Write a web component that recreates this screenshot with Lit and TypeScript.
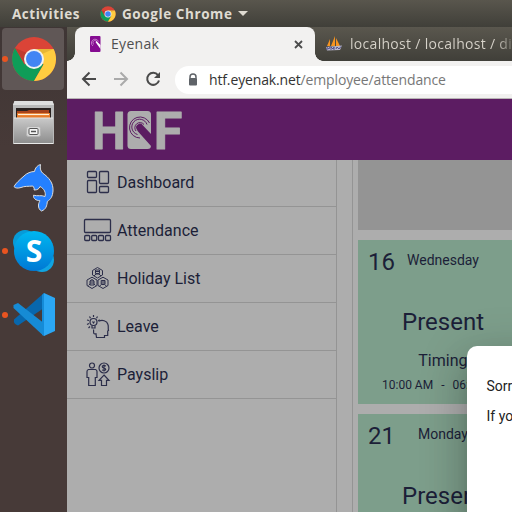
import { LitElement, html, svg, css } from "lit";
import { customElement, property } from "lit/decorators.js";

const chrome = svg`
  <circle cx="24" cy="24" r="22" fill="#db4437"/>
  <path d="M5 13A22 22 0 0 0 24 46L33.5 29.5 24 24 14.5 29.5Z" fill="#0f9d58"/>
  <path d="M24 14H43.6A22 22 0 0 1 24 46L33.5 29.5Z" fill="#ffcd40"/>
  <path d="M24 14H43.6L32 19Z" fill="#c99b2b" opacity=".45"/>
  <path d="M5 13L15 29 17 18Z" fill="#8f2c23" opacity=".35"/>
  <circle cx="24" cy="24" r="10" fill="#f1f1f1"/>
  <circle cx="24" cy="24" r="8" fill="#4285f4"/>`;

const files = svg`
  <defs><linearGradient id="fg" x2="0" y2="1"><stop stop-color="#c9c9c9"/><stop offset="1" stop-color="#8e8e8e"/></linearGradient></defs>
  <path d="M4.500 2H42.500L44 6V45H3V6Z" fill="#b9b9b9"/>
  <path d="M4.500 2H42.500L44 6H3Z" fill="#dedede"/>
  <rect x="6" y="9" width="35" height="11" fill="#29211f"/>
  <path d="M7 12H17L19 11H39V19H7Z" fill="#a8431b"/>
  <path d="M7 14H40V20H7Z" fill="#e87b28"/>
  <path d="M8 15.500H39" stroke="#fff0d8" stroke-width="1.200"/>
  <path d="M4 19H43V44H4Z" fill="url(#fg)"/>
  <path d="M4 19H43" stroke="#e4e4e4"/>
  <rect x="16.500" y="27.500" width="14" height="10" rx="2" fill="#d8d8d8" stroke="#b4b4b4"/>
  <rect x="19" y="29.500" width="9" height="6" rx="1" fill="#f4f4f4" stroke="#555"/>
  <path d="M21 32.500H26" stroke="#555" stroke-width="1.500"/>
  <path d="M4 44.500H43" stroke="#e9e9e9"/>`;

const dolphin = svg`
  <path d="M4 23.500C6 20 9.500 17 14 13C17 10 21 8.500 24.500 8.500C25 4.800 27.500 2.300 30.500 1.500C30 5 30.200 7.500 32.500 10C39 14.500 43.500 20 43 28C42.500 33.500 41 36 37.300 38.500C37 42.500 36 46.500 31.500 48C29.500 46.800 28.300 45 28.500 42C28.600 40 29.500 38.800 30 37.800C26 37.500 23 35.500 23.500 32.200C28 33.500 31 31.800 35 33.500C36 29.500 34.500 26 30 23.500C29 26 27.500 27 24 27C24.800 25.500 23.800 24.500 22.800 23C18 23.500 14.500 23 11 24.500C8 25.500 5 25.300 4 23.500Z" fill="#2480ff" stroke="#dcdcdc" stroke-width="1" stroke-linejoin="round"/>`;

const skype = svg`
  <defs><linearGradient id="sg" x2="0" y2="1"><stop stop-color="#00b7f0"/><stop offset="1" stop-color="#0078d4"/></linearGradient></defs>
  <circle cx="15" cy="15" r="12" fill="#079bd8"/><circle cx="32" cy="33" r="12" fill="#10a5e2"/>
  <circle cx="24" cy="24" r="20" fill="url(#sg)"/>
  <text x="24" y="35" text-anchor="middle" font-family="Open Sans, sans-serif" font-size="30" font-weight="700" fill="#fff">S</text>`;

const code = svg`
  <path d="M4 28.500L34 2V17L8 34.500Q3 33 4 28.500Z" fill="#0867ad"/>
  <path d="M3.500 14L8 12 35 33V44.500L31.500 43 3.500 17Z" fill="#168bd5"/>
  <path d="M34 2L45 7V40L34 45Z" fill="#2ba7f4"/>
  <path d="M34 2V45L32 44V4Z" fill="#148bd8"/>`;

const menuIcons = [
  svg`<rect x="6.500" y="2.500" width="9" height="6" rx="1"/><rect x="18.500" y="2.500" width="9" height="12" rx="1"/><rect x="6.500" y="11.500" width="9" height="12" rx="1"/><rect x="18.500" y="17.500" width="9" height="6" rx="1"/>`,
  svg`<rect x="3.500" y="2.500" width="26" height="13" rx="1"/><rect x="3.700" y="18.500" width="5" height="5" rx="1"/><rect x="10.700" y="18.500" width="5" height="5" rx="1"/><rect x="17.500" y="18.500" width="5" height="5" rx="1"/><rect x="24.500" y="18.500" width="5" height="5" rx="1"/>`,
  svg`<g stroke-width="1"><path d="M11.500 10V5.500L16.500 2.500 21.500 5.500V10L16.500 13Z"/><path d="M6 20.500V15L11 12.200 16 15V20.500L11 23.500Z"/><path d="M17 20.500V15L22 12.200 27 15V20.500L22 23.500Z"/>
    <path d="M14.500 5H18.500V8.500H14.500ZM13 11L15 9H18L20 11M14.500 6.500H18.500"/><path d="M9 20V16Q11 13 13 16V20M10 15V21M12 15V21M7.500 20.500L9 19M14.500 20.500L13 19"/><path d="M20.200 15.500H24V19H20.200ZM18.500 21L20.500 19.500H23.500L25.500 21M20.500 17H24"/></g>`,
  svg`<g stroke-width="1.200"><circle cx="12.500" cy="9" r="3.500"/><path d="M11 12.500V15H14V12.500M11.500 8.500L12.500 10 13.500 8.500"/><path d="M12.500 2V4M8.500 3.500L9.500 5.200M16.500 3.500L15.500 5.200M6 7L8 7.500M19 7L17 7.500M6 11.500L8 10.500M7.500 15L9 13.500"/>
    <path d="M17.500 8.300C21 6.500 26 7.500 27 11.500C27.700 14 26.800 15 27.500 17.500L26.700 18V22.500H23.500V24.500H15.500L15 20.800C11.500 21.500 13 19 12.500 16.500"/></g>`,
  svg`<g stroke-width="1.200"><circle cx="11" cy="4.500" r="2.500"/><path d="M7.500 8.500H14.500Q16 9 16 10.500V16.500H14.300V24.500H7.700V16.500H6V10.500Q6 9 7.500 8.500Z"/><circle cx="23" cy="7" r="5"/><path d="M25 5Q21 3.500 21.300 6C21.500 7.500 24.700 6.500 24.700 8.500Q24 10 21 9M23 3.500V10.500M23 14L28 19.300H25.500V24.500H20.500V19.300H18Z"/></g>`,
];
const menu = ["Dashboard", "Attendance", "Holiday List", "Leave", "Payslip"];
const dock = [
  { icon: chrome, active: true, running: true },
  { icon: files, active: false, running: false },
  { icon: dolphin, active: false, running: false },
  { icon: skype, active: false, running: true },
  { icon: code, active: false, running: true },
];

@customElement("day-card")
class DayCard extends LitElement {
  @property() date = "";
  @property() day = "";
  static styles = css`
    :host { display: block; height: 164px; width: 166px; background: #7d9e8b; color: #1c1f38; box-sizing: border-box; padding: 0 10px; flex: none; white-space: nowrap; }
    .top { display: flex; height: 44px; align-items: center; }
    .date { font-size: 24px; width: 27px; }
    .day { font-size: 14px; flex: 1; text-align: center; margin: -4px 23px 0 0; }
    .status { font-size: 24px; line-height: 32px; margin-top: 22px; padding-left: 4px; text-align: center; }
    .label { font-size: 16px; line-height: 22px; margin-top: 12px; padding-left: 8px; text-align: center; width: 142px; }
    .hours { font-size: 12px; line-height: 16px; margin-top: 5px; padding-left: 14px; display: flex; gap: 8px; }
  `;
  render() {
    return html`<div class="top"><span class="date">${this.date}</span><span class="day">${this.day}</span></div>
      <div class="status">Present</div><div class="label">Timings</div><div class="hours"><span>10:00 AM</span><span>-</span><span>06:30</span></div>`;
  }
}

@customElement("app-root")
class AppRoot extends LitElement {
  static styles = css`
    :host { display: grid; grid-template: 27px 485px / 67px 445px; width: 512px; height: 512px; overflow: hidden; position: relative; background: #463a38; font-family: Roboto, sans-serif; }
    svg { display: block; flex: none; }
    .panel { grid-column: 1 / 3; background: linear-gradient(#59564d, #403f39); color: #dfdbd2; display: flex; align-items: center; font: 700 13.5px "Open Sans", sans-serif; padding-left: 12px; white-space: nowrap; }
    .activities { width: 88px; letter-spacing: .52px; }
    .current { margin-left: 6px; width: 112px; letter-spacing: .58px; }
    .caret { border: 5px solid transparent; border-top-color: #dfdbd2; border-bottom: 0; margin-left: 4px; }
    .dock { display: flex; flex-direction: column; gap: 2px; padding: 1px 2px; background: linear-gradient(#3f3635, #473a38 25%); }
    .tile { height: 62px; width: 62px; border-radius: 4px; display: flex; align-items: center; }
    .tile.active { background: #605756; }
    .dot { width: 6px; height: 6px; border-radius: 50%; margin-right: 1.500px; }
    .dot.on { background: #e95420; }
    .window { display: flex; flex-direction: column; min-width: 0; overflow: hidden; }
    .tabs { height: 34px; display: flex; background: linear-gradient(#5a574e, #403f39); padding-left: 8px; font: 14px "Open Sans", sans-serif; }
    .tab { width: 240px; height: 34px; box-sizing: border-box; border-radius: 8px 8px 0 0; background: #f2f1f0; color: #4f4f4f; display: flex; align-items: center; padding: 0 11px 0 15px; flex: none; }
    .foot { align-self: flex-end; width: 8px; height: 8px; flex: none; }
    .foot.left { margin-left: -8px; background: radial-gradient(circle at 0 0, transparent 7.5px, #f2f1f0 8px); }
    .foot.right { background: radial-gradient(circle at 100% 0, transparent 7.5px, #f2f1f0 8px); }
    .title { margin: -1px 0 0 10px; flex: 1; letter-spacing: .3px; }
    .other { display: flex; align-items: center; color: #d8d4cb; padding-left: 2px; white-space: nowrap; letter-spacing: .3px; }
    .othertitle { margin: -1px 0 0 7px; width: 163px; flex: none; background: linear-gradient(90deg, #d8d4cb 145px, #77746b 162px); color: transparent; background-clip: text; }
    .toolbar { height: 37px; background: #f2f1f0; display: flex; align-items: center; border-bottom: 1px solid #b8b4b5; }
    .address { width: 340px; height: 28px; background: white; border-radius: 14px 0 0 14px; margin-left: 12px; display: flex; align-items: center; padding-left: 12px; font: 14px "Open Sans", sans-serif; color: #777; flex: none; letter-spacing: -.14px; }
    .host { color: #333; margin-left: 10px; }
    .header { background: #5c1c62; height: 61px; padding: 11px 27px; box-sizing: border-box; }
    .page { display: flex; height: 352px; background: #adadad; }
    .menu { width: 269px; border-right: 1px solid #949494; color: #1c1f38; flex: none; }
    .item { height: 47px; border-bottom: 1px solid #949494; display: flex; align-items: center; font-size: 16px; padding-left: 14px; }
    .item:first-child { height: 45px; padding-bottom: 1px; }
    .item svg { margin-right: 3px; }
    .calendar { margin-left: 15px; border-left: 1px solid #949494; padding-left: 5px; display: flex; flex-direction: column; gap: 10px; flex: none; }
    .blank { background: #949494; height: 70px; flex: none; }
    .dialog { position: absolute; left: 467px; top: 346px; width: 300px; height: 240px; border-radius: 10px; background: white; box-sizing: border-box; padding: 30px 19.500px; color: #222; font-size: 14px; line-height: 20px; white-space: nowrap; box-shadow: 0 11px 15px -7px #0003, 0 24px 38px 3px #00000024, 0 9px 46px 8px #0000001f; }
    .line { margin-bottom: 10px; }
  `;
  render() {
    return html`
      <div class="panel"><span class="activities">Activities</span><svg width="16" height="16" viewBox="1 1 46 46">${chrome}</svg><span class="current">Google Chrome</span><i class="caret"></i></div>
      <div class="dock">${dock.map((d) => html`<div class="tile ${d.active ? "active" : ""}"><i class="dot ${d.running ? "on" : ""}"></i><svg width="48" height="50" viewBox="0 -1 48 50">${d.icon}</svg></div>`)}</div>
      <div class="window">
        <div class="tabs"><i class="foot left"></i>
          <div class="tab">
            <svg width="11" height="16"><rect width="10.500" height="16" rx="1" fill="#850c91"/><path d="M3 10A3.700 3.700 0 1 1 8.500 5.500M4 8.500A2.200 2.200 0 1 1 7 5.500" fill="none" stroke="#ce91d2" stroke-width=".8"/><path d="M5.500 6L10.500 13V9L6.500 5Z" fill="#fff"/></svg>
            <span class="title">Eyenak</span><svg width="11" height="11" viewBox="0 0 11 11"><path d="M2 2L9 9M9 2L2 9" stroke="#4c4c4c" stroke-width="1.800"/></svg>
          </div><i class="foot right"></i>
          <div class="other">
            <svg width="18" height="18" viewBox="0 0 18 18"><path d="M2 11L5 4V11ZM6 11L10 1V11ZM11 11V3L15 11Z" fill="#f79420"/><path d="M1 12L17 10.500 15 15 2 15.500Z" fill="#b9b8cc"/><path d="M2 15V12.500L4 14 5 12M6 15V12L8 14 9 12V15M11 14L12 12 14 14 16 11.500" stroke="#51518a" stroke-width="1" fill="none"/></svg>
            <span class="othertitle">localhost / localhost / di</span>
          </div>
        </div>
        <div class="toolbar">
          <svg width="96" height="37" viewBox="67 61 96 37" fill="none" stroke-width="2"><path d="M96 79H83M89.500 72.500L83 79 89.500 85.500" stroke="#4a4a4a"/><path d="M114 79H127M120.500 72.500L127 79 120.500 85.500" stroke="#aaa"/><path d="M158 75.200A6 6 0 1 0 159 80.500" stroke="#4a4a4a"/><path d="M160 72V78H154Z" fill="#4a4a4a"/></svg>
          <div class="address"><svg width="12" height="14"><path d="M3 5.500V4A3 3 0 0 1 9 4V5.500" fill="none" stroke="#5f6368" stroke-width="1.500"/><rect x="2" y="5" width="8" height="7.500" rx="1" fill="#5f6368"/></svg><span class="host">htf.eyenak.net</span><span>/employee/attendance</span></div>
        </div>
        <div class="header">
          <svg width="92" height="40" viewBox="0 0 92 40" overflow="visible"><g fill="#adadad" stroke="#adadad" stroke-width="1" stroke-linejoin="round" font-family="Roboto, sans-serif" font-size="52" font-weight="700"><text transform="translate(-1.800 38.500) scale(.91 1)">H</text><text transform="translate(59.800 38.500) scale(1 1)">F</text></g>
          <rect x="33.500" y="1" width="23.500" height="38" rx="3.500" fill="#adadad"/><g fill="none" stroke="#5c1c62" stroke-width="1"><path d="M46 28A10.500 10.500 0 1 1 55.500 13"/><path d="M43.500 24.500A7.800 7.800 0 1 1 53 14.500"/><path d="M42 21A5 5 0 1 1 50 14.500"/></g><path d="M42.800 19.500A3.300 3.300 0 0 1 49 15.500L57 24V36L44 21.500Z" fill="#5c1c62"/></svg>
        </div>
        <div class="page">
          <div class="menu">${menu.map((m, i) => html`<div class="item"><svg width="33" height="28" viewBox="0 0 33 28" fill="none" stroke="#2c2e4a" stroke-width="1.300">${menuIcons[i]}</svg><span>${m}</span></div>`)}</div>
          <div class="calendar"><div class="blank"></div><day-card date="16" day="Wednesday"></day-card><day-card date="21" day="Monday"></day-card></div>
        </div>
      </div>
      <div class="dialog"><div class="line">Sorry</div><div class="line">If you</div></div>`;
  }
}
